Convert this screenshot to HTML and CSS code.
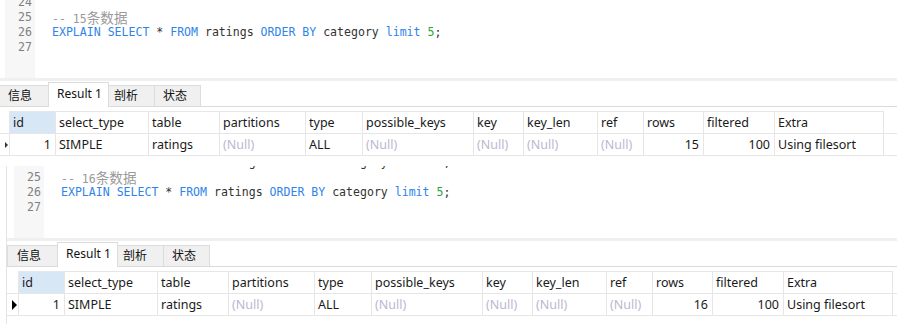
FILE: index.html
```html
<!DOCTYPE html>
<html lang="zh-CN">
<head>
  <meta charset="UTF-8">
  <title>EXPLAIN 排序对比</title>
  <link rel="stylesheet" href="styles.css">
</head>
<body>

  <!-- 第一张截图：15条数据 -->
  <section class="shot shot-a">
    <div class="frame">
      <div class="pane">
        <div class="editor">
          <div class="gutter">
            <div>24</div><div>25</div><div>26</div><div>27</div>
          </div>
          <div class="code">
            <div class="line"> </div>
            <div class="line"><span class="cm">-- 15<span class="cjk">条数据</span></span></div>
            <div class="line"><span class="kw">EXPLAIN</span> <span class="kw">SELECT</span> * <span class="kw">FROM</span> ratings <span class="kw">ORDER</span> <span class="kw">BY</span> category <span class="kw">limit</span> <span class="num">5</span>;</div>
            <div class="line"> </div>
          </div>
        </div>

        <div class="tabs">
          <div class="tab tab-info">信息</div>
          <div class="tab tab-result active">Result 1</div>
          <div class="tab tab-profile">剖析</div>
          <div class="tab tab-status">状态</div>
        </div>

        <div class="grid">
          <div class="row head">
            <div class="cell mark"></div>
            <div class="cell sel">id</div>
            <div class="cell">select_type</div>
            <div class="cell">table</div>
            <div class="cell">partitions</div>
            <div class="cell">type</div>
            <div class="cell">possible_keys</div>
            <div class="cell">key</div>
            <div class="cell">key_len</div>
            <div class="cell">ref</div>
            <div class="cell">rows</div>
            <div class="cell">filtered</div>
            <div class="cell">Extra</div>
          </div>
          <div class="row">
            <div class="cell mark"><span class="arrow"></span></div>
            <div class="cell num-cell">1</div>
            <div class="cell">SIMPLE</div>
            <div class="cell">ratings</div>
            <div class="cell null">(Null)</div>
            <div class="cell">ALL</div>
            <div class="cell null">(Null)</div>
            <div class="cell null">(Null)</div>
            <div class="cell null">(Null)</div>
            <div class="cell null">(Null)</div>
            <div class="cell num-cell">15</div>
            <div class="cell num-cell">100</div>
            <div class="cell">Using filesort</div>
          </div>
        </div>
      </div>
    </div>
  </section>

  <!-- 第二张截图：16条数据 -->
  <section class="shot shot-b">
    <div class="frame">
      <div class="pane">
        <div class="editor">
          <div class="gutter">
            <div>24</div><div>25</div><div>26</div><div>27</div>
          </div>
          <div class="code">
            <div class="line"><span class="kw">EXPLAIN</span> <span class="kw">SELECT</span> * <span class="kw">FROM</span> ratings <span class="kw">ORDER</span> <span class="kw">BY</span> category <span class="kw">limit</span> <span class="num">5</span>;</div>
            <div class="line"><span class="cm">-- 16<span class="cjk">条数据</span></span></div>
            <div class="line"><span class="kw">EXPLAIN</span> <span class="kw">SELECT</span> * <span class="kw">FROM</span> ratings <span class="kw">ORDER</span> <span class="kw">BY</span> category <span class="kw">limit</span> <span class="num">5</span>;</div>
            <div class="line"> </div>
          </div>
        </div>

        <div class="tabs">
          <div class="tab tab-info">信息</div>
          <div class="tab tab-result active">Result 1</div>
          <div class="tab tab-profile">剖析</div>
          <div class="tab tab-status">状态</div>
        </div>

        <div class="grid">
          <div class="row head">
            <div class="cell mark"></div>
            <div class="cell sel">id</div>
            <div class="cell">select_type</div>
            <div class="cell">table</div>
            <div class="cell">partitions</div>
            <div class="cell">type</div>
            <div class="cell">possible_keys</div>
            <div class="cell">key</div>
            <div class="cell">key_len</div>
            <div class="cell">ref</div>
            <div class="cell">rows</div>
            <div class="cell">filtered</div>
            <div class="cell">Extra</div>
          </div>
          <div class="row">
            <div class="cell mark"><span class="arrow"></span></div>
            <div class="cell num-cell">1</div>
            <div class="cell">SIMPLE</div>
            <div class="cell">ratings</div>
            <div class="cell null">(Null)</div>
            <div class="cell">ALL</div>
            <div class="cell null">(Null)</div>
            <div class="cell null">(Null)</div>
            <div class="cell null">(Null)</div>
            <div class="cell null">(Null)</div>
            <div class="cell num-cell">16</div>
            <div class="cell num-cell">100</div>
            <div class="cell">Using filesort</div>
          </div>
        </div>
      </div>
    </div>
  </section>

</body>
</html>
```

FILE: styles.css
```css
body {
  margin: 0;
  background: #fff;
  color: #1a1a1a;
  font-family: "Noto Sans", "Noto Sans CJK SC", sans-serif;
}

/* Each capture is a crop of the same panel */
.shot {
  overflow: hidden;
}

.shot-a {
  height: 166px;
}

.shot-a .frame {
  margin: -5px 0 0 -9px;
}

.shot-b {
  height: 158px;
}

.shot-b .frame {
  margin-top: -11px;
}

.frame {
  width: 910px;
  padding-left: 6px;
}

.pane {
  border-left: 1px solid #e4e4e4;
  padding-bottom: 20px;
}

/* SQL editor */
.editor {
  display: flex;
  height: 83px;
  border-bottom: 3px solid #f0f0f0;
  font-family: "DejaVu Sans Mono", "Noto Sans CJK SC", monospace;
  font-size: 11.55px;
  line-height: 15px;
}

.gutter {
  width: 27px;
  margin-left: 7px;
  padding-right: 3px;
  background: #f7f7f7;
  color: #808080;
  text-align: right;
}

.code {
  padding-left: 17px;
  color: #333;
}

.line {
  height: 15px;
  white-space: pre;
}

.kw {
  color: #2f84ea;
}

.num {
  color: #2ca53c;
}

.cm {
  color: #9a9a9a;
}

.cjk {
  font-family: "Noto Sans CJK SC", sans-serif;
  font-size: 13.6px;
}

/* Result tabs */
.tabs {
  display: flex;
  align-items: flex-end;
  height: 25px;
  border-bottom: 1px solid #dadada;
  font-size: 12px;
}

.tab {
  box-sizing: border-box;
  height: 21px;
  line-height: 19px;
  padding-left: 8px;
  background: #f0f0f0;
  border: 1px solid #dcdcdc;
  border-bottom: none;
  margin-right: -1px;
  color: #111;
}

.tab.active {
  height: 25px;
  line-height: 22px;
  margin-bottom: -1px;
  background: #fff;
}

.tab-info {
  width: 51px;
  padding-left: 9px;
}

.tab-result {
  width: 61px;
}

.tab-profile {
  width: 47px;
  padding-left: 5px;
}

.tab-status {
  width: 47px;
}

/* Result grid */
.grid {
  margin-top: 4px;
  font-size: 12.5px;
}

.row {
  display: grid;
  grid-template-columns: 12px 46px 93px 71px 86px 57px 111px 50px 74px 46px 60px 71px 109px;
  height: 22px;
  border-bottom: 1px solid #e6e6e6;
  box-sizing: border-box;
}

.row.head {
  height: 23px;
}

.cell {
  box-sizing: border-box;
  padding: 0 4px 0 3px;
  border-right: 1px solid #e6e6e6;
  line-height: 21px;
  white-space: nowrap;
  overflow: hidden;
}

.head .cell {
  border-top: 1px solid #e6e6e6;
}

.head .cell.mark {
  border-top: none;
}

.cell.sel {
  background: #d8e7f6;
}

.cell.mark {
  padding: 0 0 0 5px;
  display: flex;
  align-items: center;
}

.num-cell {
  text-align: right;
}

.null {
  color: #bdb7cf;
}

/* Current row marker */
.arrow {
  width: 0;
  height: 0;
  border-left: 5px solid #000;
  border-top: 5px solid transparent;
  border-bottom: 5px solid transparent;
}

.shot-a .arrow {
  margin-left: 2px;
  border-left: 3px solid #333;
  border-top: 3.5px solid transparent;
  border-bottom: 3.5px solid transparent;
}
```
